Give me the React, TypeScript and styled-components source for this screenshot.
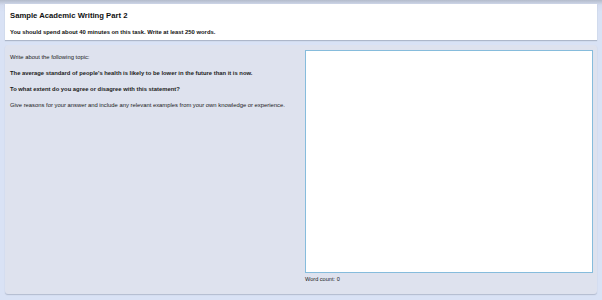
import React, { useState } from "react";
import styled, { createGlobalStyle } from "styled-components";

const GlobalStyle = createGlobalStyle`
  html, body {
    margin: 0;
    padding: 0;
    height: 100%;
  }
  body {
    background: linear-gradient(to bottom, #b3bbcb 0px, #d4dcef 5px, #d9e2f5 12px, #d9e2f5 100%);
    font-family: "Liberation Sans", Arial, sans-serif;
    color: #111;
  }
`;

const Page = styled.div`
  width: 602px;
  height: 300px;
  box-sizing: border-box;
  padding: 4px 5px 0 5px;
  display: flex;
  flex-direction: column;
  gap: 5px;
`;

const Header = styled.header`
  background: #ffffff;
  height: 36px;
  box-sizing: border-box;
  padding: 7px 5px 0 5px;
  box-shadow: 0 1px 1px rgba(120, 130, 150, 0.45);
`;

const Title = styled.h1`
  margin: 0;
  font-size: 7.7px;
  font-weight: bold;
  line-height: 10px;
`;

const Instruction = styled.p`
  margin: 7px 0 0 0;
  font-size: 5.85px;
  font-weight: bold;
  line-height: 8px;
`;

const Panel = styled.main`
  height: 249px;
  box-sizing: border-box;
  background: #dee2ee;
  border-radius: 3px;
  box-shadow: 0 1px 1px rgba(140, 150, 170, 0.5);
  padding: 5px 4px 0 5px;
  display: grid;
  grid-template-columns: 1fr 288px;
  gap: 8px;
`;

const Prompt = styled.section`
  padding-top: 3px;
`;

const PromptLine = styled.p<{ $strong?: boolean }>`
  margin: 0 0 8px 0;
  font-size: 5.85px;
  line-height: 8px;
  font-weight: ${(p) => (p.$strong ? "bold" : "normal")};
  color: #1a1a1a;
`;

const Editor = styled.section`
  display: flex;
  flex-direction: column;
`;

const Answer = styled.textarea`
  width: 288px;
  height: 223px;
  box-sizing: border-box;
  margin: 0;
  border: 1px solid #86bcdc;
  background: #ffffff;
  resize: none;
  outline: none;
  padding: 3px;
  font-family: "Liberation Sans", Arial, sans-serif;
  font-size: 6px;
`;

const WordCount = styled.div`
  margin-top: 2px;
  font-size: 5.6px;
  line-height: 8px;
  color: #1a1a1a;
`;

export default function App() {
  const [text, setText] = useState("");
  const words = text.trim() ? text.trim().split(/\s+/).length : 0;

  return (
    <>
      <GlobalStyle />
      <Page>
        <Header>
          <Title>Sample Academic Writing Part 2</Title>
          <Instruction>
            You should spend about 40 minutes on this task. Write at least 250 words.
          </Instruction>
        </Header>
        <Panel>
          <Prompt>
            <PromptLine>Write about the following topic:</PromptLine>
            <PromptLine $strong>
              The average standard of people's health is likely to be lower in the future than it is now.
            </PromptLine>
            <PromptLine $strong>To what extent do you agree or disagree with this statement?</PromptLine>
            <PromptLine>
              Give reasons for your answer and include any relevant examples from your own knowledge or experience.
            </PromptLine>
          </Prompt>
          <Editor>
            <Answer value={text} onChange={(e) => setText(e.target.value)} />
            <WordCount>Word count: {words}</WordCount>
          </Editor>
        </Panel>
      </Page>
    </>
  );
}
